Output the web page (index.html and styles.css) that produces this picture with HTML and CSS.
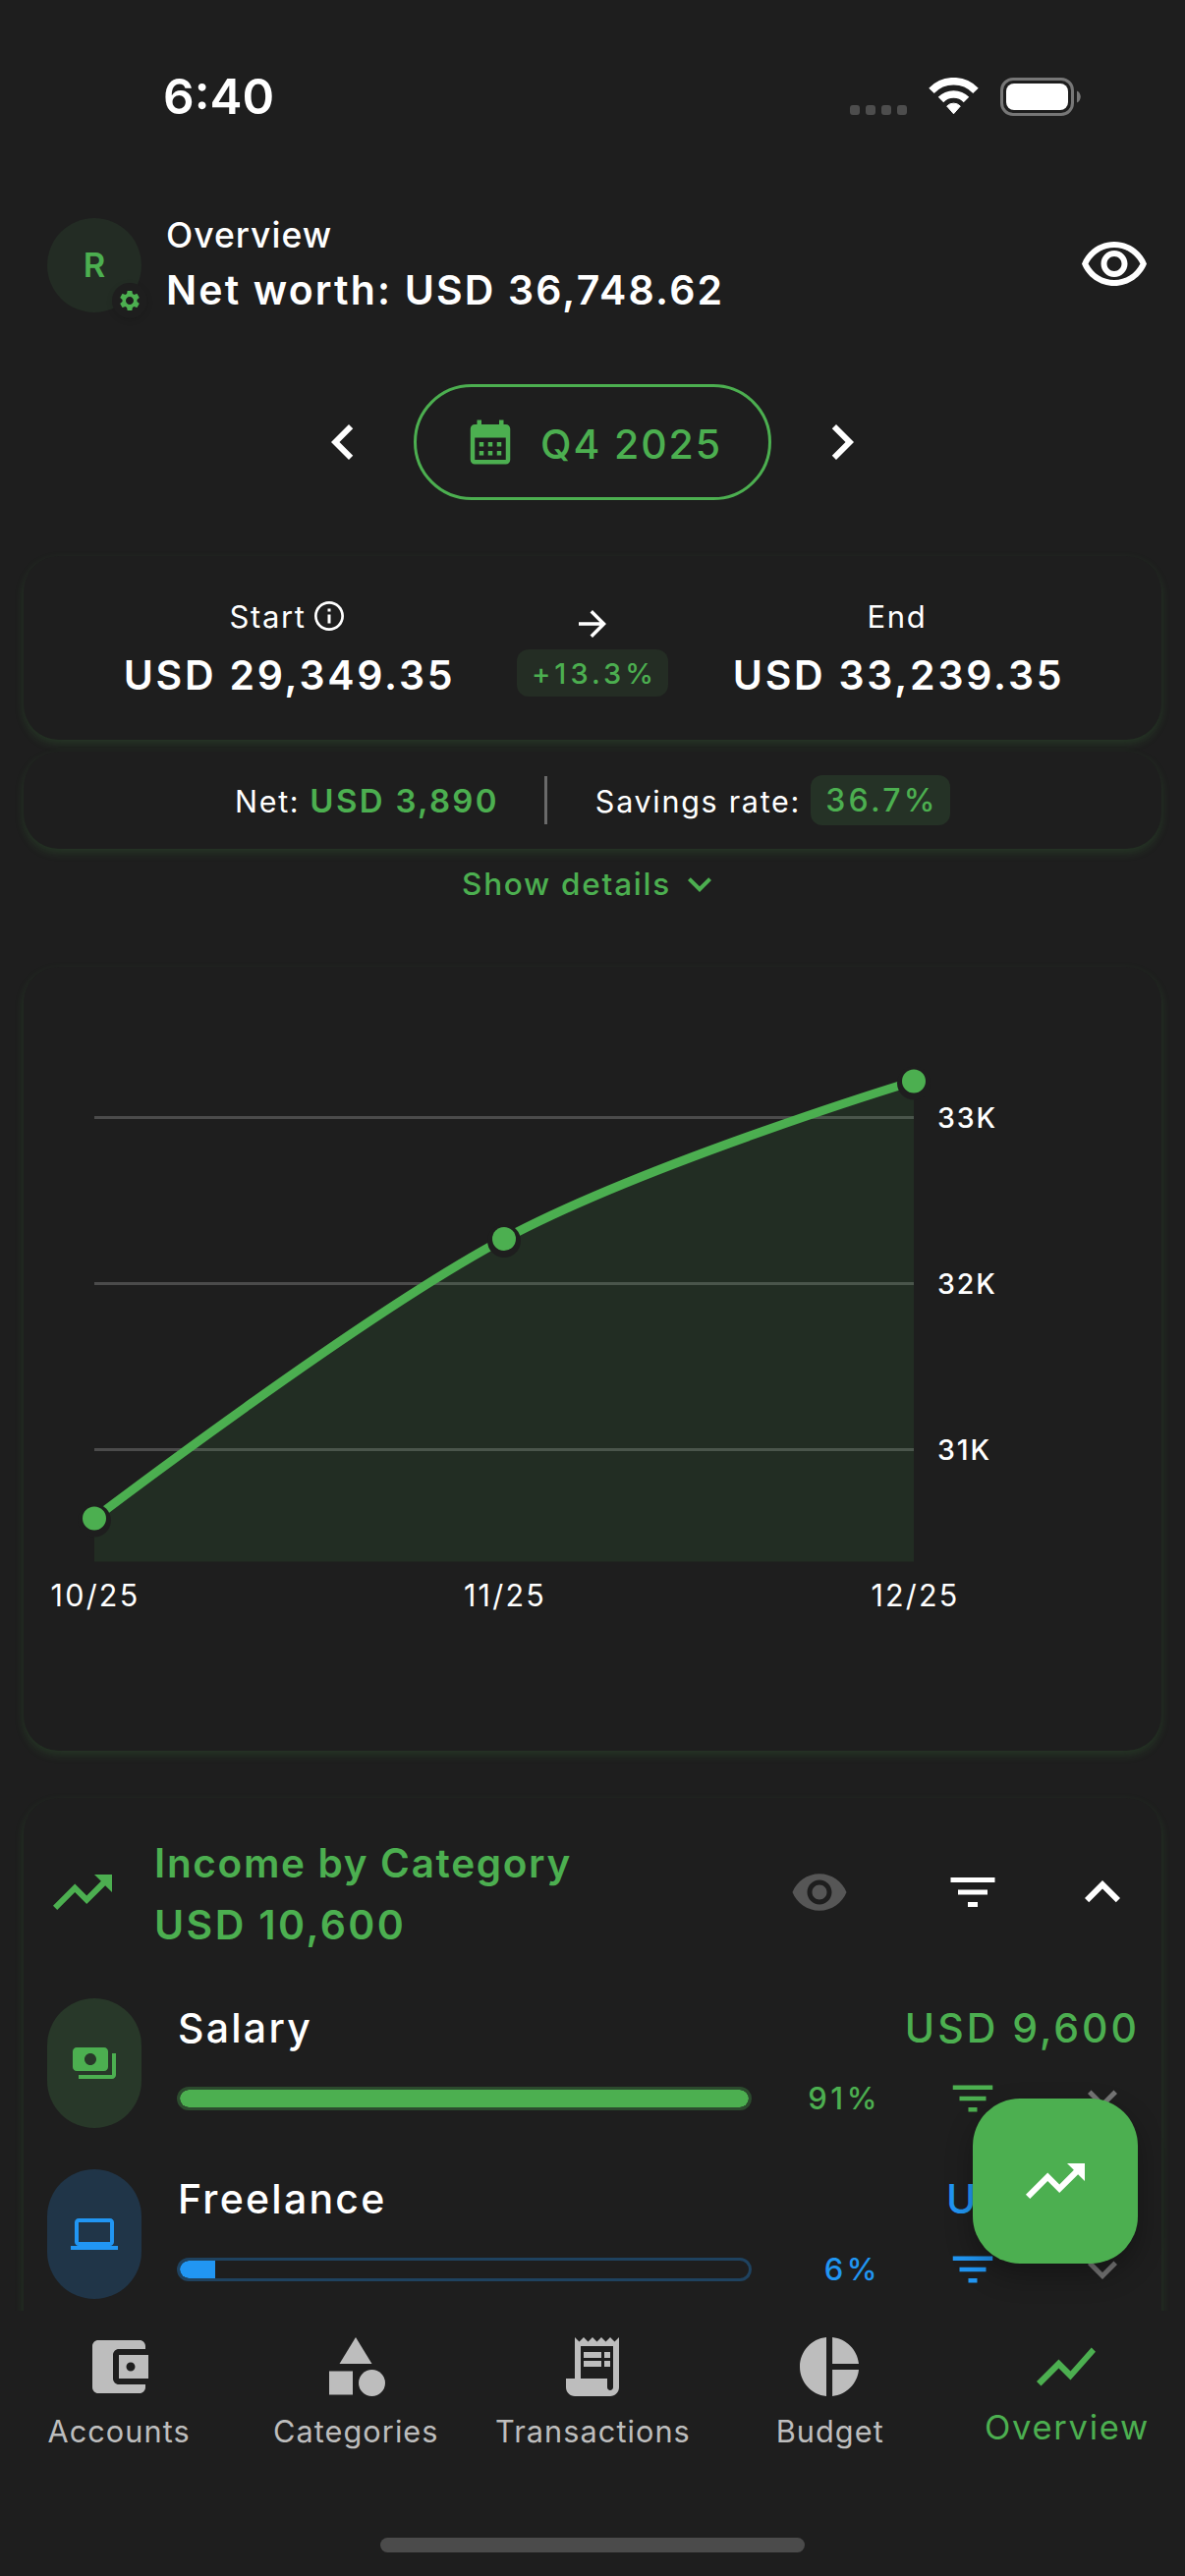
FILE: index.html
```html
<!DOCTYPE html>
<html lang="en">
<head>
<meta charset="utf-8">
<title>Overview</title>
<link rel="stylesheet" href="styles.css">
</head>
<body>
<svg class="defs" aria-hidden="true">
  <symbol id="trending" viewBox="0 0 24 24"><path d="M16 6l2.29 2.29-4.88 4.88-4-4L2 16.59 3.41 18l6-6 4 4 6.3-6.29L22 12V6z"/></symbol>
  <symbol id="filter" viewBox="0 0 24 24"><path d="M10 18h4v-2h-4v2zM3 6v2h18V6H3zm3 7h12v-2H6v2z"/></symbol>
  <symbol id="more" viewBox="0 0 24 24"><path d="M16.59 8.59L12 13.17 7.41 8.59 6 10l6 6 6-6z"/></symbol>
</svg>
<main class="screen">
  <div class="status">
    <span class="clock">6:40</span>
    <div class="indicators">
      <div class="cell"><i></i><i></i><i></i><i></i></div>
      <svg class="wifi" width="51" height="39" viewBox="0 0 51 39"><g fill="none" stroke="#fff" stroke-width="7.6"><path d="M3 13.3A31.2 31.2 0 0 1 48 13.3"/><path d="M12.5 22.5A18 18 0 0 1 38.5 22.5"/></g><path fill="#fff" stroke="#fff" stroke-linejoin="round" d="M18.7 29A9.5 9.5 0 0 1 32.3 29L25.5 36.8z"/></svg>
      <svg width="82" height="39" viewBox="0 0 82 39"><rect x="1.5" y="1.5" width="72" height="36" rx="11.5" fill="none" stroke="#777" stroke-width="3"/><rect x="6" y="6" width="63" height="27" rx="8" fill="#fff"/><path d="M78 13.5c5 2 5 10 0 12z" fill="#777"/></svg>
    </div>
  </div>

  <header class="header">
    <div class="avatar">R
      <span class="gear"><svg width="24" height="24" viewBox="0 0 24 24"><path fill="#4caf50" d="M19.43 12.98c.04-.32.07-.64.07-.98s-.03-.66-.07-.98l2.11-1.65c.19-.15.24-.42.12-.64l-2-3.46c-.09-.16-.26-.25-.44-.25-.06 0-.12.01-.17.03l-2.49 1c-.52-.4-1.08-.73-1.69-.98l-.38-2.65C14.46 2.18 14.25 2 14 2h-4c-.25 0-.46.18-.49.42l-.38 2.65c-.61.25-1.17.59-1.69.98l-2.49-1c-.06-.02-.12-.03-.18-.03-.17 0-.34.09-.43.25l-2 3.46c-.13.22-.07.49.12.64l2.11 1.65c-.04.32-.07.65-.07.98s.03.66.07.98l-2.11 1.65c-.19.15-.24.42-.12.64l2 3.46c.09.16.26.25.44.25.06 0 .12-.01.17-.03l2.49-1c.52.4 1.08.73 1.69.98l.38 2.65c.03.24.24.42.49.42h4c.25 0 .46-.18.49-.42l.38-2.65c.61-.25 1.17-.59 1.69-.98l2.49 1c.06.02.12.03.18.03.17 0 .34-.09.43-.25l2-3.46c.12-.22.07-.49-.12-.64l-2.11-1.65zM12 16c-2.2 0-4-1.8-4-4s1.8-4 4-4 4 1.8 4 4-1.8 4-4 4z"/></svg></span>
    </div>
    <div class="titles">
      <div class="title">Overview</div>
      <div class="worth">Net worth: USD 36,748.62</div>
    </div>
    <svg class="i72 reveal" viewBox="0 0 24 24"><path d="M12 6c3.79 0 7.17 2.13 8.82 5.5C19.17 14.87 15.79 17 12 17s-7.17-2.13-8.82-5.5C4.83 8.13 8.21 6 12 6m0-2C7 4 2.73 7.11 1 11.5 2.73 15.89 7 19 12 19s9.27-3.11 11-7.5C21.27 7.11 17 4 12 4zm0 5c1.38 0 2.5 1.12 2.5 2.5S13.38 14 12 14s-2.5-1.12-2.5-2.5S10.62 9 12 9m0-2c-2.48 0-4.5 2.02-4.5 4.5S9.52 16 12 16s4.5-2.02 4.5-4.5S14.48 7 12 7z"/></svg>
  </header>

  <nav class="period">
    <svg class="i72" viewBox="0 0 24 24"><path d="M15.41 7.41L14 6l-6 6 6 6 1.41-1.41L10.83 12z"/></svg>
    <div class="range">
      <svg class="i54" viewBox="0 0 24 24"><path d="M19 4h-1V2h-2v2H8V2H6v2H5c-1.11 0-1.99.9-1.99 2L3 20c0 1.1.89 2 2 2h14c1.1 0 2-.9 2-2V6c0-1.1-.9-2-2-2zm0 16H5V10h14v10zM9 14H7v-2h2v2zm4 0h-2v-2h2v2zm4 0h-2v-2h2v2zm-8 4H7v-2h2v2zm4 0h-2v-2h2v2zm4 0h-2v-2h2v2z"/></svg>
      <span>Q4 2025</span>
    </div>
    <svg class="i72" viewBox="0 0 24 24"><path d="M10 6L8.59 7.41 13.17 12l-4.58 4.59L10 18l6-6z"/></svg>
  </nav>

  <section class="card balance">
    <div class="col">
      <div class="label">Start<svg class="info" viewBox="0 0 24 24"><path d="M11 7h2v2h-2zm0 4h2v6h-2zm1-9C6.480 2 2 6.480 2 12s4.480 10 10 10 10-4.480 10-10S17.520 2 12 2zm0 18.200c-4.520 0-8.200-3.680-8.200-8.200S7.480 3.800 12 3.800s8.200 3.680 8.200 8.200-3.680 8.200-8.200 8.200z"/></svg></div>
      <div class="amount">USD 29,349.35</div>
    </div>
    <div class="change">
      <svg class="i42" viewBox="0 0 24 24"><path d="M12 4l-1.410 1.410L16.170 11H4v2h12.170l-5.580 5.590L12 20l8-8z"/></svg>
      <div class="chip">+13.3%</div>
    </div>
    <div class="col">
      <div class="label">End</div>
      <div class="amount">USD 33,239.35</div>
    </div>
  </section>

  <section class="card summary">
    <span class="key">Net:</span><span class="net">USD 3,890</span>
    <span class="divider"></span>
    <span class="key rate">Savings rate:</span><span class="chip strong">36.7%</span>
  </section>

  <div class="details"><span>Show details</span><svg class="i48" viewBox="0 0 24 24"><use href="#more"/></svg></div>

  <section class="card chart">
    <svg width="1158" height="798" viewBox="24 984 1158 798">
      <g stroke="#4b4b4b" stroke-width="3"><path d="M96 1137.500H930M96 1306.500H930M96 1475.500H930"/></g>
      <path fill="none" stroke="#4caf50" stroke-width="9" d="M96 1545.600C96 1545.600 367 1339 513 1261C659 1183 930 1100.500 930 1100.500"/>
      <path fill="#4caf50" fill-opacity=".11" d="M96 1545.600C96 1545.600 367 1339 513 1261C659 1183 930 1100.500 930 1100.500V1589.500H96z"/>
      <g fill="#1e1e1e"><circle cx="96" cy="1547.600" r="17"/><circle cx="513" cy="1263" r="17"/><circle cx="930" cy="1102.500" r="17"/></g>
      <g fill="#4caf50"><circle cx="96" cy="1545.600" r="12"/><circle cx="513" cy="1261" r="12"/><circle cx="930" cy="1100.500" r="12"/></g>
      <g class="ylabels"><text x="954" y="1148">33K</text><text x="954" y="1317">32K</text><text x="954" y="1486">31K</text></g>
      <g class="xlabels"><text x="97" y="1635">10/25</text><text x="514" y="1635">11/25</text><text x="931.500" y="1635">12/25</text></g>
    </svg>
  </section>

  <section class="card income">
    <div class="income-head">
      <svg class="i72 green" viewBox="0 0 24 24"><use href="#trending"/></svg>
      <div class="income-title"><div>Income by Category</div><div class="total">USD 10,600</div></div>
      <svg class="i60 dim" viewBox="0 0 24 24"><path d="M12 4.500C7 4.500 2.730 7.610 1 12c1.730 4.390 6 7.500 11 7.500s9.270-3.110 11-7.500c-1.730-4.390-6-7.500-11-7.500zM12 17c-2.760 0-5-2.240-5-5s2.240-5 5-5 5 2.240 5 5-2.240 5-5 5zm0-8c-1.660 0-3 1.340-3 3s1.340 3 3 3 3-1.340 3-3-1.340-3-3-3z"/></svg>
      <svg class="i60 head-filter" viewBox="0 0 24 24"><use href="#filter"/></svg>
      <svg class="i72" viewBox="0 0 24 24"><path d="M12 8l-6 6 1.410 1.410L12 10.830l4.590 4.580L18 14z"/></svg>
    </div>

    <div class="category salary">
      <div class="pill"><svg class="i48" viewBox="0 0 24 24"><path d="M19 14V6c0-1.100-.9-2-2-2H3c-1.100 0-2 .9-2 2v8c0 1.100.9 2 2 2h14c1.100 0 2-.9 2-2zm-9-1c-1.660 0-3-1.340-3-3s1.340-3 3-3 3 1.340 3 3-1.340 3-3 3zm13-6v11c0 1.100-.9 2-2 2H4v-2h17V7h2z"/></svg></div>
      <div class="info-col">
        <div class="line"><span class="name">Salary</span><span class="sum">USD 9,600</span></div>
        <div class="line"><div class="bar"><div class="fill" style="width:100%"></div></div><span class="pct">91%</span><svg class="i54 row-filter" viewBox="0 0 24 24"><use href="#filter"/></svg><svg class="i60 grey" viewBox="0 0 24 24"><use href="#more"/></svg></div>
      </div>
    </div>

    <div class="category freelance">
      <div class="pill"><svg class="i48" viewBox="0 0 24 24"><path d="M20 18c1.100 0 1.990-.9 1.990-2L22 6c0-1.100-.9-2-2-2H4c-1.100 0-2 .9-2 2v10c0 1.100.9 2 2 2H0v2h24v-2h-4zM4 6h16v10H4V6z"/></svg></div>
      <div class="info-col">
        <div class="line"><span class="name">Freelance</span><span class="sum">USD 600</span></div>
        <div class="line"><div class="bar"><div class="fill" style="width:6.300%"></div></div><span class="pct">6%</span><svg class="i54 row-filter" viewBox="0 0 24 24"><use href="#filter"/></svg><svg class="i60 grey" viewBox="0 0 24 24"><use href="#more"/></svg></div>
      </div>
    </div>
  </section>
  <div class="fab"><svg class="i72" viewBox="0 0 24 24"><use href="#trending"/></svg></div>
</main>

<footer class="tabs">
  <div class="tab"><svg class="i72" viewBox="0 0 24 24"><path d="M21 18v1c0 1.100-.9 2-2 2H5c-1.110 0-2-.9-2-2V5c0-1.100.89-2 2-2h14c1.100 0 2 .9 2 2v1h-9c-1.110 0-2 .9-2 2v8c0 1.100.89 2 2 2h9zm-9-2h10V8H12v8zm4-2.500c-.83 0-1.500-.67-1.500-1.500s.67-1.500 1.500-1.500 1.500.67 1.500 1.500-.67 1.500-1.500 1.500z"/></svg><span>Accounts</span></div>
  <div class="tab"><svg class="i72" viewBox="0 0 24 24"><path d="M12 2l-5.500 9h11z"/><circle cx="17.500" cy="17.500" r="4.500"/><path d="M3 13.500h8v8H3z"/></svg><span>Categories</span></div>
  <div class="tab"><svg class="i72" viewBox="0 0 24 24"><path d="M19.500 3.500L18 2l-1.500 1.500L15 2l-1.500 1.500L12 2l-1.500 1.500L9 2 7.500 3.500 6 2v14H3v3c0 1.660 1.340 3 3 3h12c1.660 0 3-1.340 3-3V2l-1.500 1.500zM19 19c0 .55-.45 1-1 1s-1-.45-1-1v-3H8V5h11v14z"/><path d="M9 7h6v2H9zM16 7h2v2h-2zM9 10h6v2H9zM16 10h2v2h-2z"/></svg><span>Transactions</span></div>
  <div class="tab"><svg class="i72" viewBox="0 0 24 24"><path d="M11 2v20c-5.070-.5-9-4.790-9-10s3.930-9.500 9-10zm2.030 0v8.990H22c-.47-4.740-4.240-8.520-8.970-8.990zm0 11.010V22c4.740-.47 8.500-4.250 8.970-8.990h-8.970z"/></svg><span>Budget</span></div>
  <div class="tab active"><svg class="i72" viewBox="0 0 24 24"><path d="M3.500 18.490l6-6.010 4 4L22 6.920l-1.410-1.410-7.090 7.970-4-4L2 16.990z"/></svg><span>Overview</span></div>
</footer>
<div class="home"></div>
</body>
</html>
```
FILE: styles.css
```css
* { box-sizing: border-box; }

body {
  margin: 0;
  width: 1206px;
  height: 2622px;
  overflow: hidden;
  background: #1e1e1e;
  color: #fff;
  font-family: Inter, "Liberation Sans", sans-serif;
  white-space: nowrap;
}

svg { display: block; flex: none; fill: currentColor; }
.defs { display: none; }
.i42 { width: 42px; height: 42px; }
.i48 { width: 48px; height: 48px; }
.i54 { width: 54px; height: 54px; }
.i60 { width: 60px; height: 60px; }
.i72 { width: 72px; height: 72px; }
.green { color: #4caf50; }
.dim { color: #565656; }
.grey { color: #757575; }

.screen { position: relative; height: 2352px; overflow: hidden; }

/* status bar */
.status {
  display: flex;
  align-items: center;
  justify-content: space-between;
  height: 196px;
  padding: 0 106px 0 166px;
}
.clock { font-size: 49.5px; font-weight: 600; line-height: 60px; }
.indicators { display: flex; align-items: center; gap: 22px; }
.cell { display: flex; gap: 6px; padding-top: 27px; }
.cell i { width: 10px; height: 10px; border-radius: 3px; background: #4d4d4d; }

/* header */
.header { display: flex; align-items: center; height: 148px; padding: 0 36px 0 48px; }
.avatar {
  position: relative;
  width: 96px;
  height: 96px;
  border-radius: 50%;
  background: #232c24;
  color: #4caf50;
  font-size: 34.5px;
  font-weight: 600;
  line-height: 95px;
  text-align: center;
}
.gear {
  position: absolute;
  left: 66px;
  top: 66px;
  width: 36px;
  height: 36px;
  padding: 6px;
  border-radius: 50%;
  background: #1e1e1e;
  box-shadow: 0 2px 6px rgba(0, 0, 0, .12);
}
.titles { flex: 1; padding-left: 25px; margin-top: -5px; }
.title { font-size: 35.5px; font-weight: 500; letter-spacing: 1px; line-height: 54px; }
.worth { font-size: 41px; font-weight: 600; letter-spacing: 2.15px; line-height: 56px; }
.reveal { margin-top: -1px; }

/* period picker */
.period { display: flex; align-items: center; justify-content: center; gap: 36px; height: 212px; }
.range {
  display: flex;
  align-items: center;
  gap: 24px;
  width: 364px;
  height: 118px;
  padding-left: 48px;
  border: 3px solid #4caf50;
  border-radius: 59px;
  color: #4caf50;
  font-size: 41px;
  font-weight: 500;
  letter-spacing: 1.9px;
}
.range span { padding-top: 3px; }

/* cards */
.card {
  margin: 0 24px;
  border-radius: 36px;
  background: #1e1e1e;
  box-shadow: 0 4px 10px rgba(76, 175, 80, .17);
}
.chip {
  display: flex;
  align-items: center;
  justify-content: center;
  border-radius: 12px;
  background: #242d24;
  color: #4caf50;
  font-weight: 500;
}

.balance {
  display: grid;
  grid-template-columns: 1fr 154px 1fr;
  height: 187px;
  margin-top: 10px;
  padding: 0 36px;
}
.col { padding-top: 31px; text-align: center; }
.label {
  display: flex;
  align-items: center;
  justify-content: center;
  gap: 5px;
  height: 60px;
  font-size: 31px;
  letter-spacing: 1.66px;
}
.info { width: 36px; height: 36px; margin-bottom: 1px; }
.amount { padding-left: 3px; font-size: 41px; font-weight: 600; letter-spacing: 2.75px; line-height: 61px; }
.change { display: flex; flex-direction: column; align-items: center; gap: 5px; padding-top: 48px; }
.change .chip { width: 154px; height: 48px; padding-left: 4px; font-size: 29px; letter-spacing: 4px; }

.summary { display: flex; align-items: center; justify-content: center; height: 99px; margin-top: 12px; }
.key { padding-top: 2px; font-size: 30.5px; letter-spacing: 1.7px; }
.net { margin-left: 10px; color: #4caf50; font-size: 33px; font-weight: 600; letter-spacing: 2.3px; }
.divider { width: 3px; height: 49px; margin: 0 49px 0 46px; background: #6a6a6a; }
.strong {
  width: 142px;
  height: 51px;
  margin-left: 10px;
  padding: 0 0 1px 3px;
  background: #253226;
  font-size: 32px;
  letter-spacing: 3.2px;
}

.details {
  display: flex;
  align-items: center;
  justify-content: center;
  gap: 5px;
  height: 72px;
  color: #4caf50;
  font-size: 31.5px;
  font-weight: 500;
  letter-spacing: 1.75px;
}
.details span { padding-bottom: 2px; }

.chart { height: 798px; margin-top: 48px; }
.ylabels { fill: #fff; font-size: 28.5px; font-weight: 500; letter-spacing: 1.9px; }
.xlabels { fill: #fff; font-size: 30.5px; letter-spacing: 2.2px; text-anchor: middle; }

/* income breakdown */
.income { height: 720px; margin-top: 48px; padding: 0 24px; }
.income-head { display: flex; align-items: center; height: 192px; }
.income-title {
  flex: 1;
  margin: 3px 0 0 37px;
  color: #4caf50;
  font-size: 40.5px;
  font-weight: 600;
  letter-spacing: 1.67px;
  line-height: 63px;
}
.total { font-size: 41px; letter-spacing: 2.4px; }
.head-filter { margin: 0 66px 0 96px; }

.category { display: flex; gap: 36px; height: 132px; margin-top: 12px; }
.category + .category { margin-top: 42px; }
.pill {
  display: flex;
  align-items: center;
  justify-content: center;
  width: 96px;
  border-radius: 48px;
}
.info-col { flex: 1; display: flex; flex-direction: column; gap: 12px; }
.line { display: flex; align-items: center; height: 60px; }
.name { flex: 1; padding-left: 1px; font-size: 41px; font-weight: 500; letter-spacing: 2.25px; }
.sum { margin-right: -2px; font-size: 41px; font-weight: 500; letter-spacing: 3px; }
.bar {
  width: 585px;
  height: 24px;
  overflow: hidden;
  border: 3px solid;
  border-radius: 12px;
}
.fill { height: 100%; border-radius: 9px 0 0 9px; background: currentColor; }
.pct { width: 131px; padding-bottom: 2px; font-size: 31px; font-weight: 500; letter-spacing: 3.5px; text-align: right; }
.row-filter { margin: 0 75px 0 67px; }

.salary .pill { background: #283829; }
.salary .pill, .salary .sum, .salary .bar, .salary .pct, .salary .row-filter { color: #4caf50; }
.salary .bar { border-color: #2c4b2e; }
.salary .fill { border-radius: 9px; }
.freelance .pill { background: #203548; }
.freelance .pill, .freelance .sum, .freelance .bar, .freelance .pct, .freelance .row-filter { color: #2196f3; }
.freelance .bar { border-color: #1f425f; }

.fab {
  position: absolute;
  left: 990px;
  top: 2136px;
  display: flex;
  align-items: center;
  justify-content: center;
  width: 168px;
  height: 168px;
  border-radius: 48px;
  background: #4caf50;
  box-shadow: 0 12px 28px rgba(0, 0, 0, .3);
}

/* bottom navigation */
.tabs { display: grid; grid-template-columns: repeat(5, 1fr); height: 231px; padding-top: 21px; }
.tab {
  display: flex;
  flex-direction: column;
  align-items: center;
  color: #bdbdbd;
  font-size: 30.7px;
  letter-spacing: 1.05px;
  line-height: 60px;
}
.tab span { padding-left: 1px; }
.active { color: #4caf50; font-size: 34.5px; letter-spacing: 1.72px; line-height: 52px; }
.home { width: 432px; height: 15px; margin: 0 auto; border-radius: 8px; background: #4b4b4b; }
```
